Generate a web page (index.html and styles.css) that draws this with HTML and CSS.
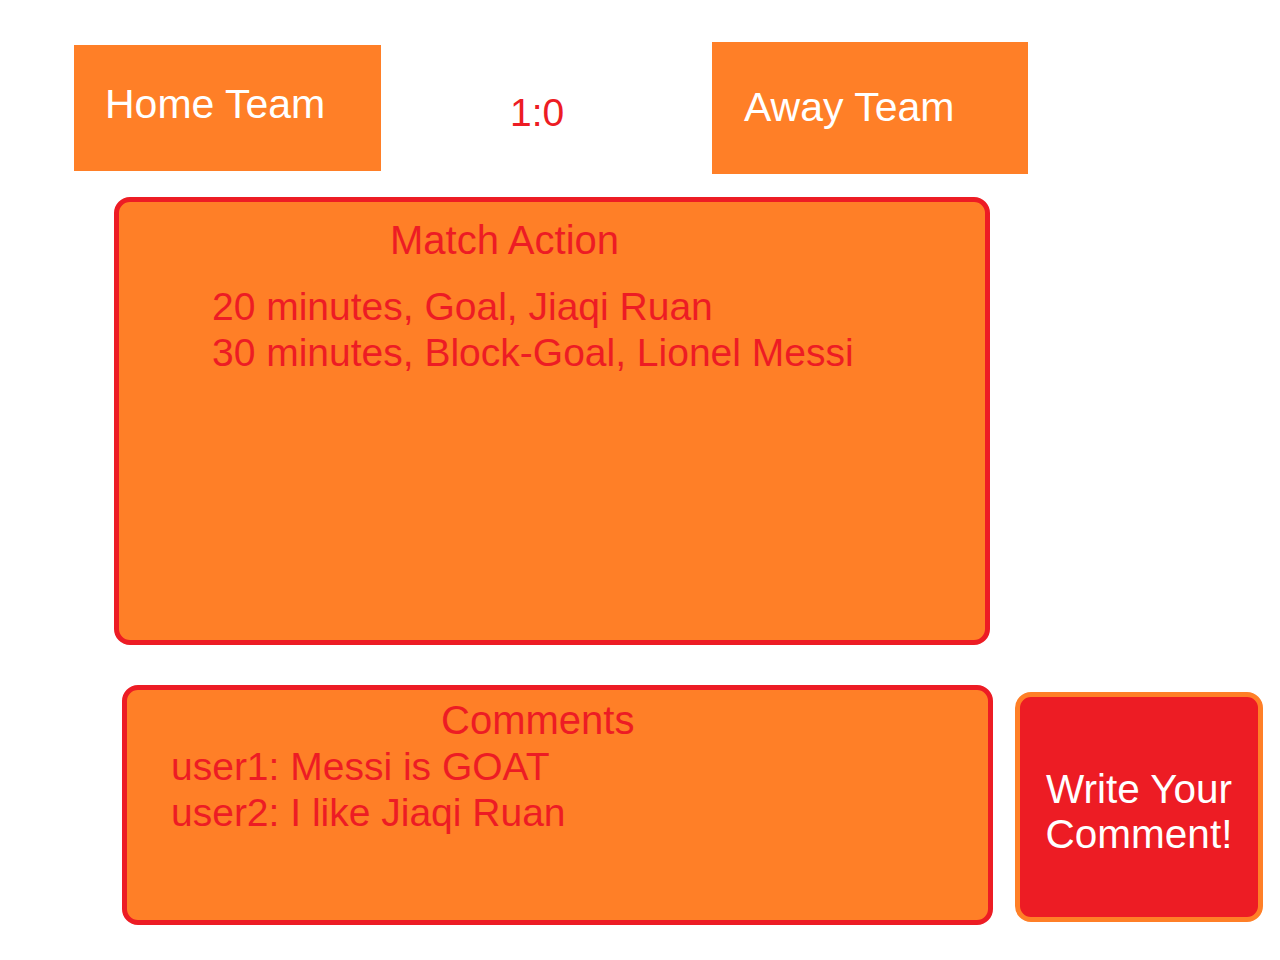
FILE: index.html
```html
<!DOCTYPE html>
<html lang="en">
<head>
<meta charset="utf-8">
<title>Match</title>
<link rel="stylesheet" href="styles.css">
</head>
<body>
<header class="header">
  <div class="team team-home">Home Team</div>
  <div class="score">1:0</div>
  <div class="team team-away">Away Team</div>
</header>
<section class="match">
  <h2 class="match-title">Match Action</h2>
  <ul class="events">
    <li>20 minutes, Goal, Jiaqi Ruan</li>
    <li>30 minutes, Block-Goal, Lionel Messi</li>
  </ul>
</section>
<div class="bottom">
  <section class="comments">
    <h2 class="comments-title">Comments</h2>
    <ul class="comment-list">
      <li>user1: Messi is GOAT</li>
      <li>user2: I like Jiaqi Ruan</li>
    </ul>
  </section>
  <button class="write-btn" type="button">Write Your Comment!</button>
</div>
</body>
</html>
```
FILE: styles.css
```css
* { box-sizing: border-box; }

body {
  margin: 0;
  background: #ffffff;
  font-family: "Liberation Sans", Arial, sans-serif;
  font-size: 39px;
  line-height: normal;
  color: #ED1C24;
}

ul { list-style: none; margin: 0; padding: 0; }
h2 { margin: 0; font-weight: normal; font-size: 40px; }

.header {
  display: flex;
  align-items: flex-start;
  padding: 42px 0 0 74px;
}

.team {
  background: #FF7F27;
  color: #ffffff;
}

.team-home {
  width: 307px;
  height: 126px;
  margin-top: 3px;
  padding: 36px 0 0 31px;
  font-size: 41px;
}

.score {
  margin: 49px 0 0 129px;
  font-size: 39px;
  width: 56px;
}

.team-away {
  width: 316px;
  height: 132px;
  margin-left: 146px;
  padding: 42px 0 0 32px;
  font-size: 41px;
}

.match {
  width: 876px;
  height: 448px;
  margin: 23px 0 0 114px;
  background: #FF7F27;
  border: 5px solid #ED1C24;
  border-radius: 16px;
  padding-top: 16px;
}

.match-title {
  padding-left: 271px;
}

.events {
  margin-top: 21px;
  padding-left: 93px;
  line-height: 46px;
}

.bottom {
  display: flex;
  align-items: flex-start;
  margin: 40px 0 0 122px;
}

.comments {
  width: 871px;
  height: 240px;
  background: #FF7F27;
  border: 5px solid #ED1C24;
  border-radius: 16px;
  padding-top: 8px;
}

.comments-title {
  padding-left: 314px;
}

.comment-list {
  margin-top: 1px;
  padding-left: 44px;
  line-height: 46px;
}

.write-btn {
  width: 248px;
  height: 230px;
  margin: 7px 0 0 22px;
  background: #ED1C24;
  border: 5px solid #FF7F27;
  border-radius: 16px;
  color: #ffffff;
  font-family: "Liberation Sans", Arial, sans-serif;
  font-size: 40.5px;
  line-height: 45px;
  text-align: center;
  padding: 70px 4px 0;
  display: flex;
  flex-direction: column;
  align-items: center;
  justify-content: flex-start;
}
```
